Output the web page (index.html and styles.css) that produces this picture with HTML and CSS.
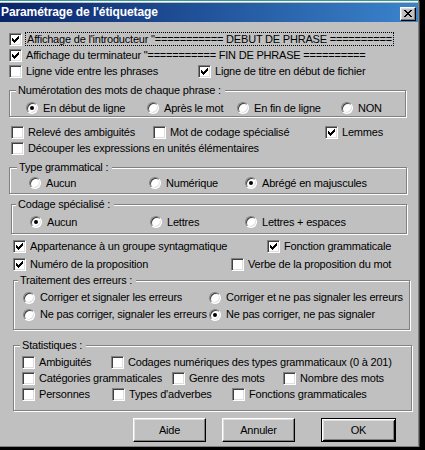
FILE: index.html
```html
<!DOCTYPE html>
<html lang="fr">
<head>
<meta charset="utf-8">
<title>Paramétrage de l'étiquetage</title>
<link rel="stylesheet" href="styles.css">
</head>
<body>
<div class="win">
  <div class="title">
    <span class="title-text">Paramétrage de l'étiquetage</span>
    <span class="close"><svg width="8" height="7" viewBox="0 0 8 7" shape-rendering="crispEdges"><path d="M0 0h2v1h-2zM6 0h2v1h-2zM1 1h2v1h-2zM5 1h2v1h-2zM2 2h4v1h-4zM3 3h2v1h-2zM2 4h4v1h-4zM1 5h2v1h-2zM5 5h2v1h-2zM0 6h2v1h-2zM6 6h2v1h-2z"/></svg></span>
  </div>

  <div class="row r1 pl9">
    <span class="it"><span class="cb"><svg class="chk" width="11" height="11" viewBox="0 0 11 11" shape-rendering="crispEdges"><path d="M8 2h1v1h-1zM7 3h2v1h-2zM2 4h1v1h-1zM6 4h3v1h-3zM2 5h2v1h-2zM5 5h3v1h-3zM2 6h5v1h-5zM3 7h3v1h-3zM4 8h1v1h-1z"/></svg></span><span class="focus">Affichage de l'introducteur "=========== DEBUT DE PHRASE ==========</span></span>
  </div>
  <div class="row pl9">
    <span class="it"><span class="cb"><svg class="chk" width="11" height="11" viewBox="0 0 11 11" shape-rendering="crispEdges"><path d="M8 2h1v1h-1zM7 3h2v1h-2zM2 4h1v1h-1zM6 4h3v1h-3zM2 5h2v1h-2zM5 5h3v1h-3zM2 6h5v1h-5zM3 7h3v1h-3zM4 8h1v1h-1z"/></svg></span><span class="txt">Affichage du terminateur "=========== FIN DE PHRASE ==========</span></span>
  </div>
  <div class="row pl9">
    <span class="it w189"><span class="cb"></span><span class="txt">Ligne vide entre les phrases</span></span>
    <span class="it"><span class="cb"><svg class="chk" width="11" height="11" viewBox="0 0 11 11" shape-rendering="crispEdges"><path d="M8 2h1v1h-1zM7 3h2v1h-2zM2 4h1v1h-1zM6 4h3v1h-3zM2 5h2v1h-2zM5 5h3v1h-3zM2 6h5v1h-5zM3 7h3v1h-3zM4 8h1v1h-1z"/></svg></span><span class="txt">Ligne de titre en début de fichier</span></span>
  </div>

  <div class="grp g-num">
    <div class="lg lg-num">Numérotation des mots de chaque phrase :</div>
    <div class="row gr-num">
      <span class="it ri w121"><span class="rb on"></span><span class="txt">En début de ligne</span></span>
      <span class="it ri w90"><span class="rb"></span><span class="txt">Après le mot</span></span>
      <span class="it ri w104"><span class="rb"></span><span class="txt">En fin de ligne</span></span>
      <span class="it ri"><span class="rb"></span><span class="txt">NON</span></span>
    </div>
  </div>

  <div class="row r-rel pl11">
    <span class="it w142"><span class="cb"></span><span class="txt">Relevé des ambiguités</span></span>
    <span class="it w172"><span class="cb"></span><span class="txt">Mot de codage spécialisé</span></span>
    <span class="it"><span class="cb"><svg class="chk" width="11" height="11" viewBox="0 0 11 11" shape-rendering="crispEdges"><path d="M8 2h1v1h-1zM7 3h2v1h-2zM2 4h1v1h-1zM6 4h3v1h-3zM2 5h2v1h-2zM5 5h3v1h-3zM2 6h5v1h-5zM3 7h3v1h-3zM4 8h1v1h-1z"/></svg></span><span class="txt">Lemmes</span></span>
  </div>
  <div class="row pl11">
    <span class="it"><span class="cb"></span><span class="txt">Découper les expressions en unités élémentaires</span></span>
  </div>

  <div class="grp g-type">
    <div class="lg lg-type">Type grammatical :</div>
    <div class="row gr-type">
      <span class="it ri w120"><span class="rb"></span><span class="txt">Aucun</span></span>
      <span class="it ri w96"><span class="rb"></span><span class="txt">Numérique</span></span>
      <span class="it ri"><span class="rb on"></span><span class="txt">Abrégé en majuscules</span></span>
    </div>
  </div>

  <div class="grp g-cod">
    <div class="lg lg-cod">Codage spécialisé :</div>
    <div class="row gr-cod">
      <span class="it ri w120"><span class="rb on"></span><span class="txt">Aucun</span></span>
      <span class="it ri w95"><span class="rb"></span><span class="txt">Lettres</span></span>
      <span class="it ri"><span class="rb"></span><span class="txt">Lettres + espaces</span></span>
    </div>
  </div>

  <div class="row r-app pl13">
    <span class="it w254"><span class="cb"><svg class="chk" width="11" height="11" viewBox="0 0 11 11" shape-rendering="crispEdges"><path d="M8 2h1v1h-1zM7 3h2v1h-2zM2 4h1v1h-1zM6 4h3v1h-3zM2 5h2v1h-2zM5 5h3v1h-3zM2 6h5v1h-5zM3 7h3v1h-3zM4 8h1v1h-1z"/></svg></span><span class="txt">Appartenance à un groupe syntagmatique</span></span>
    <span class="it"><span class="cb"><svg class="chk" width="11" height="11" viewBox="0 0 11 11" shape-rendering="crispEdges"><path d="M8 2h1v1h-1zM7 3h2v1h-2zM2 4h1v1h-1zM6 4h3v1h-3zM2 5h2v1h-2zM5 5h3v1h-3zM2 6h5v1h-5zM3 7h3v1h-3zM4 8h1v1h-1z"/></svg></span><span class="txt">Fonction grammaticale</span></span>
  </div>
  <div class="row r-numo pl13">
    <span class="it w218"><span class="cb"><svg class="chk" width="11" height="11" viewBox="0 0 11 11" shape-rendering="crispEdges"><path d="M8 2h1v1h-1zM7 3h2v1h-2zM2 4h1v1h-1zM6 4h3v1h-3zM2 5h2v1h-2zM5 5h3v1h-3zM2 6h5v1h-5zM3 7h3v1h-3zM4 8h1v1h-1z"/></svg></span><span class="txt">Numéro de la proposition</span></span>
    <span class="it"><span class="cb"></span><span class="txt">Verbe de la proposition du mot</span></span>
  </div>

  <div class="grp g-err">
    <div class="lg lg-err">Traitement des erreurs :</div>
    <div class="row row17 gr-err">
      <span class="it ri w186"><span class="rb"></span><span class="txt">Corriger et signaler les erreurs</span></span>
      <span class="it ri"><span class="rb"></span><span class="txt">Corriger et ne pas signaler les erreurs</span></span>
    </div>
    <div class="row row17 pl9">
      <span class="it ri w186"><span class="rb"></span><span class="txt">Ne pas corriger, signaler les erreurs</span></span>
      <span class="it ri"><span class="rb on"></span><span class="txt">Ne pas corriger, ne pas signaler</span></span>
    </div>
  </div>

  <div class="grp g-stat">
    <div class="lg lg-stat">Statistiques :</div>
    <div class="row gr-stat">
      <span class="it w89"><span class="cb"></span><span class="txt">Ambiguités</span></span>
      <span class="it"><span class="cb"></span><span class="txt">Codages numériques des types grammaticaux (0 à 201)</span></span>
    </div>
    <div class="row pl8">
      <span class="it w150"><span class="cb"></span><span class="txt">Catégories grammaticales</span></span>
      <span class="it w111"><span class="cb"></span><span class="txt">Genre des mots</span></span>
      <span class="it"><span class="cb"></span><span class="txt">Nombre des mots</span></span>
    </div>
    <div class="row pl8">
      <span class="it w90"><span class="cb"></span><span class="txt">Personnes</span></span>
      <span class="it w120"><span class="cb"></span><span class="txt">Types d'adverbes</span></span>
      <span class="it"><span class="cb"></span><span class="txt">Fonctions grammaticales</span></span>
    </div>
  </div>

  <div class="btns">
    <span class="btn">Aide</span>
    <span class="btn b-ann">Annuler</span>
    <span class="btn def">OK</span>
  </div>
</div>
</body>
</html>
```
FILE: styles.css
```css
html {
  background: #000;
}
body {
  margin: 0;
  font-family: "Liberation Sans", Arial, sans-serif;
  font-size: 11px;
  letter-spacing: -0.2px;
  color: #000;
}
.win {
  width: 418px;
  background: #c0c0c0;
  border-top: 1px solid #2f9b9b;
  border-right: 1px solid #808080;
  border-bottom: 1px solid #808080;
  box-shadow: inset 0 1px 0 #fff, 1px 1px 0 #404040;
  padding: 2px 0 4px;
  display: flex;
  flex-direction: column;
}
.title {
  height: 19px;
  background: linear-gradient(to right, #0a246a, #3a84cc);
  display: flex;
  align-items: flex-start;
  justify-content: space-between;
  color: #fff;
  font-weight: bold;
  font-size: 12px;
  letter-spacing: -0.1px;
}
.title-text {
  line-height: 19px;
  padding-left: 1px;
}
.close {
  width: 16px;
  height: 14px;
  margin: 4px 2px 0 0;
  box-sizing: border-box;
  background: #c0c0c0;
  border: 1px solid;
  border-color: #fff #000 #000 #fff;
  box-shadow: inset -1px -1px 0 #808080, inset 1px 1px 0 #dfdfdf;
  display: flex;
  justify-content: center;
  align-items: flex-start;
  padding-top: 2px;
}
.close svg { display: block; fill: #000; }

.row {
  display: flex;
  align-items: center;
  height: 16px;
  white-space: nowrap;
  flex: none;
}
.row17 { height: 17px; }
.r1 { margin-top: 9px; }
.pl8 { padding-left: 8px; }
.pl9 { padding-left: 9px; }
.pl11 { padding-left: 11px; }
.pl13 { padding-left: 13px; }

.it {
  display: flex;
  align-items: center;
  gap: 4px;
  flex: none;
}
.ri { gap: 5px; }
.txt { line-height: 13px; }
.focus {
  line-height: 12px;
  border: 1px dotted #000;
  padding: 0 1px;
  margin-left: -1px;
}

.w89 { width: 89px; }
.w90 { width: 90px; }
.w95 { width: 95px; }
.w96 { width: 96px; }
.w104 { width: 104px; }
.w111 { width: 111px; }
.w120 { width: 120px; }
.w121 { width: 121px; }
.w142 { width: 142px; }
.w150 { width: 150px; }
.w172 { width: 172px; }
.w186 { width: 186px; }
.w189 { width: 189px; }
.w218 { width: 218px; }
.w254 { width: 254px; }

.cb {
  width: 13px;
  height: 13px;
  box-sizing: border-box;
  background: #fff;
  border: 1px solid;
  border-color: #808080 #fff #fff #808080;
  box-shadow: inset 1px 1px 0 #404040, inset -1px -1px 0 #dfdfdf;
  flex: none;
}
.chk { display: block; fill: #000; }

.rb {
  width: 12px;
  height: 12px;
  box-sizing: border-box;
  border-radius: 50%;
  background: #fff;
  border: 1px solid;
  border-color: #808080 #fff #fff #808080;
  box-shadow: inset 1px 1px 0 #404040, inset -1px -1px 0 #dfdfdf;
  display: flex;
  align-items: center;
  justify-content: center;
  flex: none;
}
.rb.on::after {
  content: "";
  width: 4px;
  height: 4px;
  border-radius: 50%;
  background: #000;
}

.grp {
  box-sizing: border-box;
  border: 1px solid #808080;
  box-shadow: inset 1px 1px 0 #fff, 1px 1px 0 #fff;
  flex: none;
}
.lg {
  width: max-content;
  margin-top: -7px;
  line-height: 13px;
  height: 13px;
  background: #c0c0c0;
  padding: 0 4px 0 2px;
  white-space: nowrap;
}

.g-num { margin: 11px 0 0 9px; width: 397px; height: 27px; }
.lg-num { margin-left: 6px; }
.gr-num { margin-top: 3px; padding-left: 16px; }

.r-rel { margin-top: 7px; }

.g-type { margin: 11px 0 0 9px; width: 398px; height: 27px; }
.lg-type { margin-left: 7px; }
.gr-type { margin-top: 1px; padding-left: 19px; }

.g-cod { margin: 10px 0 0 11px; width: 396px; height: 30px; }
.lg-cod { margin-left: 4px; }
.gr-cod { margin-top: 3px; padding-left: 18px; }

.r-app { margin-top: 4px; }
.r-numo { margin-top: 2px; }

.g-err { margin: 8px 0 0 13px; width: 397px; height: 50px; }
.lg-err { margin-left: 4px; }
.gr-err { margin-top: 2px; padding-left: 9px; }

.g-stat { margin: 15px 0 0 13px; width: 399px; height: 66px; }
.lg-stat { margin-left: 6px; }
.gr-stat { margin-top: 2px; padding-left: 8px; }

.btns {
  display: flex;
  margin-top: 7px;
  padding-left: 133px;
  flex: none;
}
.btn {
  width: 73px;
  height: 24px;
  box-sizing: border-box;
  background: #c0c0c0;
  border: 1px solid;
  border-color: #fff #000 #000 #fff;
  box-shadow: inset -1px -1px 0 #808080, inset 1px 1px 0 #dfdfdf;
  display: flex;
  align-items: center;
  justify-content: center;
  line-height: 13px;
}
.b-ann { margin-left: 16px; }
.def {
  width: 75px;
  margin-left: 26px;
  border: 1px solid #000;
  box-shadow: inset 1px 1px 0 #fff, inset -1px -1px 0 #000, inset 2px 2px 0 #dfdfdf, inset -2px -2px 0 #808080;
}
```
